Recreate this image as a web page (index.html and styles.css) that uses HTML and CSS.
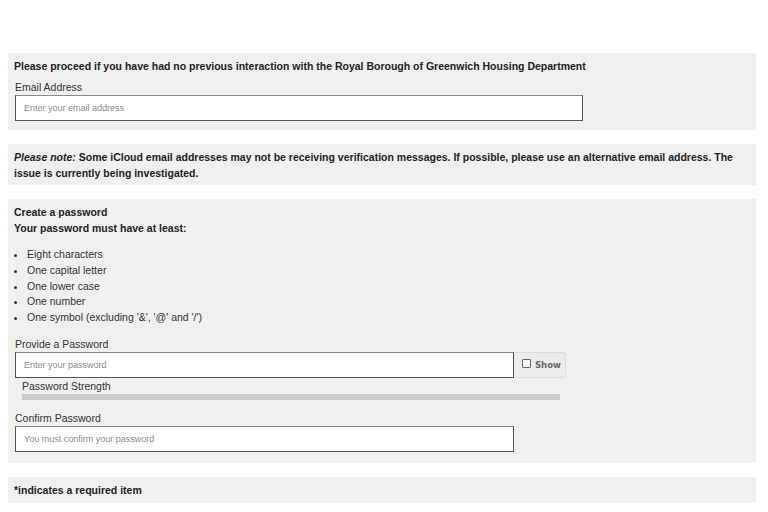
FILE: index.html
```html
<!DOCTYPE html>
<html>
<head>
<meta charset="utf-8">
<link rel="stylesheet" href="styles.css">
</head>
<body>
<div class="page">
  <section class="panel">
    <p class="strong">Please proceed if you have had no previous interaction with the Royal Borough of Greenwich Housing Department</p>
    <div class="field email">
      <label class="label">Email Address</label>
      <div class="input wide"><span class="ph">Enter your email address</span></div>
    </div>
  </section>

  <section class="panel note">
    <p class="strong"><em>Please note:</em> Some iCloud email addresses may not be receiving verification messages. If possible, please use an alternative email address. The issue is currently being investigated.</p>
  </section>

  <section class="panel pw">
    <p class="strong">Create a password</p>
    <p class="strong">Your password must have at least:</p>
    <ul class="rules">
      <li>Eight characters</li>
      <li>One capital letter</li>
      <li>One lower case</li>
      <li>One number</li>
      <li>One symbol (excluding '&amp;', '@' and '/')</li>
    </ul>
    <div class="field provide">
      <label class="label">Provide a Password</label>
      <div class="row">
        <div class="input mid"><span class="ph">Enter your password</span></div>
        <div class="show"><span class="box"></span><span class="showtxt">Show</span></div>
      </div>
      <div class="strength">
        <div class="label">Password Strength</div>
        <div class="bar"></div>
      </div>
    </div>
    <div class="field confirm">
      <label class="label">Confirm Password</label>
      <div class="input mid"><span class="ph">You must confirm your password</span></div>
    </div>
  </section>

  <section class="panel req">
    <p class="strong">*indicates a required item</p>
  </section>
</div>
</body>
</html>
```
FILE: styles.css
```css
html, body {
  margin: 0;
  padding: 0;
  background: #fff;
}
body {
  font-family: "Liberation Sans", Arial, sans-serif;
  color: #222;
  font-size: 10.5px;
}
.page {
  padding: 53px 12px 0 8px;
  display: flex;
  flex-direction: column;
  gap: 14px;
}
.panel {
  background: #f0f0f0;
  padding: 5px 6px 9px 6px;
}
.panel p {
  margin: 0;
}
.strong {
  font-weight: bold;
  line-height: 16px;
  color: #222;
}
.note {
  padding-bottom: 4px;
}
.req {
  padding-bottom: 5px;
}
.field {
  margin-left: 1px;
}
.email {
  margin-top: 5px;
}
.label {
  display: block;
  font-size: 10.5px;
  line-height: 16px;
  color: #333;
}
.input {
  box-sizing: border-box;
  height: 26px;
  background: #fff;
  border: 1px solid #555;
  border-top-color: #8a8a8a;
  display: flex;
  align-items: center;
  padding-left: 8px;
}
.wide { width: 568px; }
.mid { width: 499px; }
.ph {
  color: #8a8a8a;
  font-size: 9px;
}
.rules {
  margin: 11px 0 0 0;
  padding-left: 13px;
  line-height: 15.75px;
  color: #333;
}
.provide {
  margin-top: 10px;
}
.pw {
  padding-bottom: 11px;
}
.row {
  display: flex;
}
.show {
  box-sizing: border-box;
  width: 52px;
  height: 26px;
  background: #ececec;
  border: 1px solid #dcdcdc;
  border-left: none;
  border-radius: 0 3px 3px 0;
  display: flex;
  align-items: center;
  padding-left: 8px;
  gap: 4px;
}
.box {
  width: 7px;
  height: 7px;
  border: 1px solid #666;
  border-radius: 1px;
  background: #fff;
  margin-top: -3px;
}
.showtxt {
  font-family: "DejaVu Sans", Verdana, sans-serif;
  font-weight: bold;
  font-size: 8.5px;
  color: #666;
}
.strength {
  margin-left: 7px;
}
.bar {
  width: 538px;
  height: 6px;
  background: #cbcbcb;
}
.confirm {
  margin-top: 10px;
}
```
